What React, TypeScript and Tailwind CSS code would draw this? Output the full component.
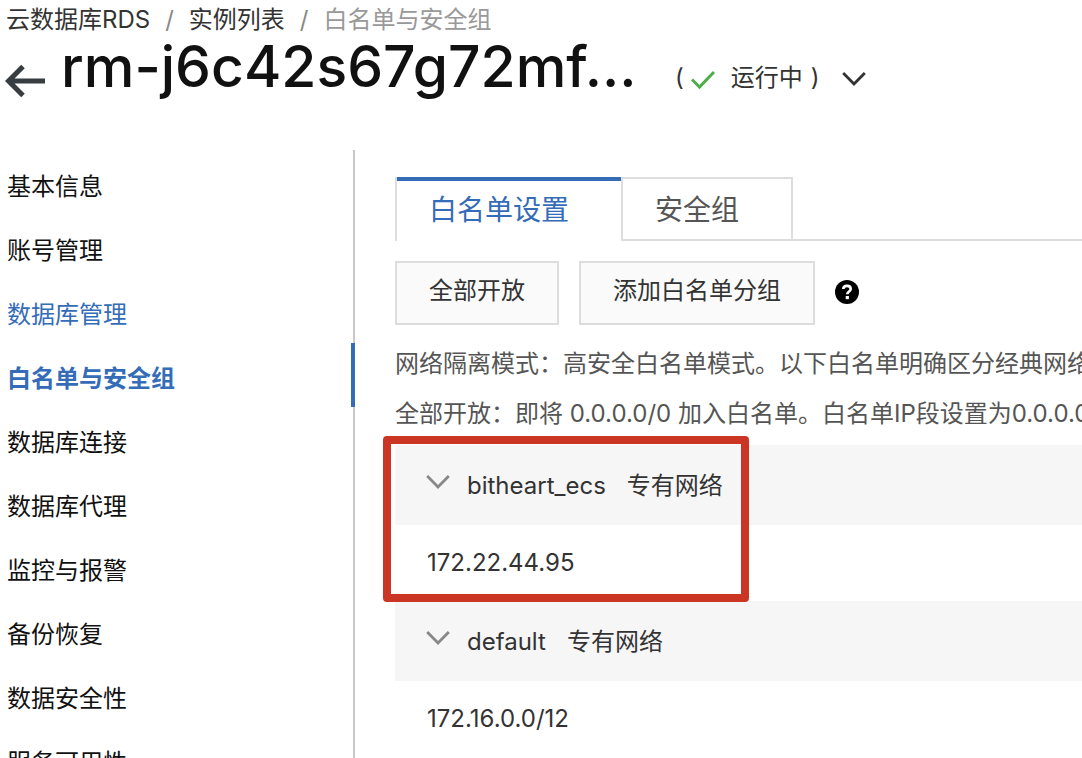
import { useState } from 'react';

const menu = [
  { label: '基本信息' },
  { label: '账号管理' },
  { label: '数据库管理', linked: true },
  { label: '白名单与安全组', active: true },
  { label: '数据库连接' },
  { label: '数据库代理' },
  { label: '监控与报警' },
  { label: '备份恢复' },
  { label: '数据安全性' },
  { label: '服务可用性' },
];

function Chevron({ className }: { className: string }) {
  return (
    <svg viewBox="0 0 24 24" className={className} fill="none" stroke="currentColor" strokeWidth="2.8" aria-hidden="true">
      <path d="M1.2 6 L12 17 L22.8 6" />
    </svg>
  );
}

function Group({ name, ip, marked }: { name: string; ip: string; marked?: boolean }) {
  const [open, setOpen] = useState(true);
  return (
    <section className="relative">
      <button
        type="button"
        aria-expanded={open}
        onClick={() => setOpen(!open)}
        className="flex h-20 w-full items-center bg-[#f6f6f6] pl-[31px] pt-0.5 text-left text-[#333]"
      >
        <Chevron className="mb-2 mr-[17px] size-6 text-[#888]" />
        <span className="mr-[21px]">{name}</span>
        <span>专有网络</span>
      </button>
      {open && <p className="flex h-[76px] items-center pl-8 text-[#333]">{ip}</p>}
      {marked && (
        <div className="pointer-events-none absolute -left-3 -top-[9px] z-10 h-[166px] w-[366px] rounded-[4px] border-8 border-[#cb3524]" />
      )}
    </section>
  );
}

export default function App() {
  const [tab, setTab] = useState(0);
  return (
    <div className="flex h-screen flex-col overflow-hidden bg-white font-['Inter','Noto_Sans_CJK_SC',sans-serif] text-2xl leading-8 text-[#333]">
      <header className="h-[150px] shrink-0">
        <nav aria-label="面包屑" className="flex h-10 items-center whitespace-nowrap pl-1.5">
          <a href="#rds">云数据库RDS</a>
          <span className="px-[15px] text-[#888]">/</span>
          <a href="#list">实例列表</a>
          <span className="px-[15px] text-[#888]">/</span>
          <span className="text-[#999]">白名单与安全组</span>
        </nav>
        <div className="flex h-[60px] items-center">
          <a href="#back" aria-label="返回" className="ml-[5px] mt-[22px] shrink-0 text-[#373d41]">
            <svg viewBox="0 0 40 34" className="h-[34px] w-10" fill="none" stroke="currentColor" strokeWidth="5" aria-hidden="true">
              <path d="M40 17H3M18 2.500 3.500 17 18 31.500" />
            </svg>
          </a>
          <h1 className="mb-1.5 ml-4 w-[570px] shrink-0 whitespace-nowrap text-[57px] font-medium leading-[60px] text-[#111]">
            rm-j6c42s67g72mf...
          </h1>
          <div className="ml-11 mt-4 flex items-center whitespace-nowrap">
            <span>(</span>
            <svg viewBox="0 0 24 24" className="ml-[7px] mr-4 mt-1 size-6" fill="none" stroke="#4dae4a" strokeWidth="3" aria-hidden="true">
              <path d="M1 11.500 8.500 19 23 4" />
            </svg>
            <span>运行中</span>
            <span className="ml-2">)</span>
            <button type="button" aria-label="展开实例" className="ml-[22px] mt-0.5">
              <Chevron className="size-6" />
            </button>
          </div>
        </div>
      </header>

      <div className="flex min-h-0 flex-1">
        <aside className="w-[355px] shrink-0 border-r-2 border-[#c8c8c8] pt-px">
          <ul>
            {menu.map((m) => (
              <li key={m.label}>
                <a
                  href={'#' + m.label}
                  className={
                    m.active
                      ? '-mr-0.5 flex h-16 items-center border-r-4 border-[#346cb8] pl-[7px] pt-2 font-bold text-[#346cb8]'
                      : m.linked
                        ? 'flex h-16 items-center pl-[7px] pt-2 text-[#346cb8]'
                        : 'flex h-16 items-center pl-[7px] pt-2 text-[#111]'
                  }
                >
                  {m.label}
                </a>
              </li>
            ))}
          </ul>
        </aside>

        <main className="min-w-0 flex-1 overflow-hidden pl-10 pt-[27px]">
          <div role="tablist" className="flex h-16 text-[28px]">
            <button
              type="button"
              role="tab"
              aria-selected={tab === 0}
              onClick={() => setTab(0)}
              className="flex w-[226px] border-l-2 border-[#ddd] text-[#346cb8]"
            >
              <span className="flex h-full w-full items-center border-t-4 border-[#346cb8] pb-0.5 pl-8">白名单设置</span>
            </button>
            <button
              type="button"
              role="tab"
              aria-selected={tab === 1}
              onClick={() => setTab(1)}
              className="flex w-[172px] items-center border-2 border-[#ddd] pl-8 pt-0.5 text-[#555]"
            >
              安全组
            </button>
            <div className="flex-1 border-b-2 border-[#ddd]" />
          </div>

          <div className="mt-5 flex items-center gap-5">
            <button type="button" className="h-16 border-2 border-[#ddd] bg-[#fafafa] px-8 pb-1">
              全部开放
            </button>
            <button type="button" className="h-16 border-2 border-[#ddd] bg-[#fafafa] px-8 pb-1">
              添加白名单分组
            </button>
            <button type="button" aria-label="帮助" className="pb-0.5">
              <svg viewBox="0 0 24 24" className="size-6" aria-hidden="true">
                <circle cx="12" cy="12" r="12" fill="#000" />
                <path d="M8.300 9.100C8.300 7 9.900 5.900 12 5.900s3.700 1.200 3.700 3.100c0 2.500-3.400 2.400-3.400 5.300" fill="none" stroke="#fff" strokeWidth="2.600" />
                <rect x="10.700" y="16" width="3.200" height="3.200" fill="#fff" />
              </svg>
            </button>
          </div>

          <div className="mb-1.5 mt-3.5 whitespace-nowrap leading-[50px] text-[#555]">
            <p>网络隔离模式：高安全白名单模式。以下白名单明确区分经典网络</p>
            <p>全部开放：即将 0.0.0.0/0 加入白名单。白名单IP段设置为0.0.0.0</p>
          </div>

          <Group name="bitheart_ecs" ip="172.22.44.95" marked />
          <Group name="default" ip="172.16.0.0/12" />
        </main>
      </div>
    </div>
  );
}
